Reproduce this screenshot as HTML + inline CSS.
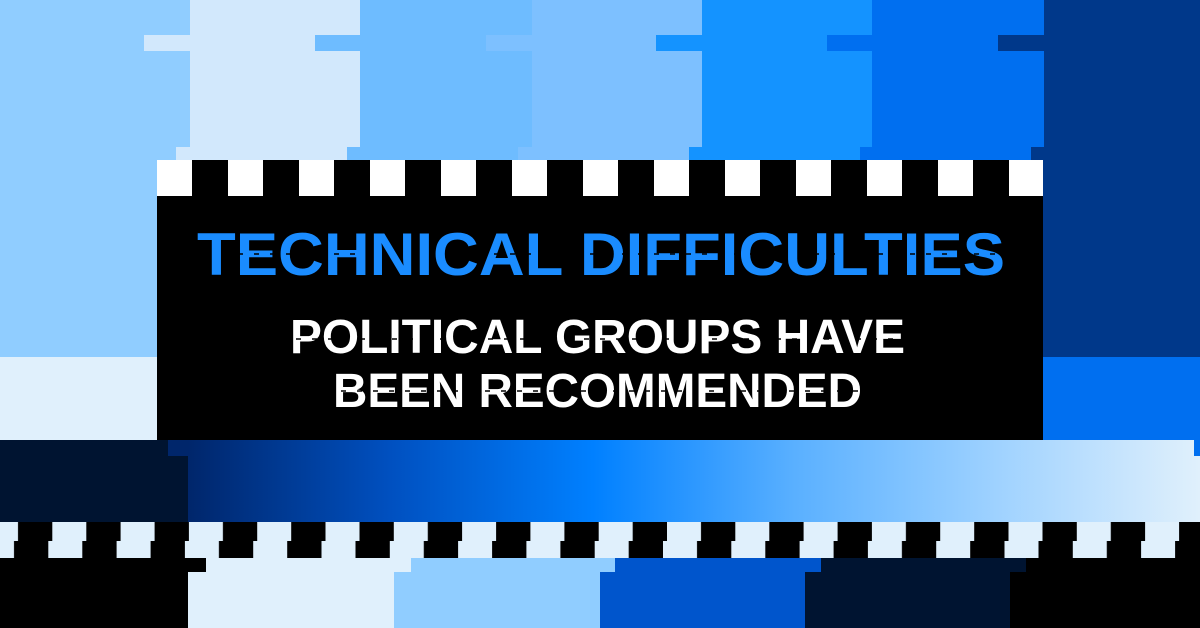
<!DOCTYPE html>
<html><head><meta charset="utf-8"><style>
html,body{margin:0;padding:0;width:1200px;height:628px;overflow:hidden;background:#000}
svg{display:block}
</style></head><body>
<svg width="1200" height="628" viewBox="0 0 1200 628" xmlns="http://www.w3.org/2000/svg">
<defs>
<linearGradient id="g" x1="188" y1="0" x2="1200" y2="0" gradientUnits="userSpaceOnUse">
<stop offset="0" stop-color="#00266b"/>
<stop offset="0.2" stop-color="#0050c0"/>
<stop offset="0.4" stop-color="#0080ff"/>
<stop offset="0.6" stop-color="#5ab0ff"/>
<stop offset="0.8" stop-color="#9fd2ff"/>
<stop offset="1" stop-color="#e0f0fc"/>
</linearGradient>
<pattern id="ck1" x="157" y="160" width="71" height="36" patternUnits="userSpaceOnUse">
<rect width="71" height="36" fill="#000"/><rect width="35" height="36" fill="#fff"/>
</pattern>
<pattern id="ckA" x="-16" y="522" width="68.3" height="20" patternUnits="userSpaceOnUse">
<rect width="68.3" height="20" fill="#000"/><rect width="34" height="20" fill="#e0f0fc"/>
</pattern>
<pattern id="ckB" x="-20" y="541" width="68.3" height="20" patternUnits="userSpaceOnUse">
<rect width="68.3" height="20" fill="#000"/><rect width="34" height="20" fill="#e0f0fc"/>
</pattern>
</defs>
<rect x="0" y="0" width="1200" height="160" fill="#90cdff"/>
<g>
<rect x="190" y="0" width="170" height="160" fill="#d2e8fc"/>
<rect x="144" y="35" width="50" height="16" fill="#d2e8fc"/>
<rect x="194" y="115" width="170" height="16" fill="#d2e8fc"/>
<rect x="208" y="131" width="170" height="16" fill="#d2e8fc"/>
<rect x="176" y="147" width="170" height="13" fill="#d2e8fc"/>

<rect x="360" y="0" width="172" height="160" fill="#6ebcff"/>
<rect x="315" y="35" width="50" height="16" fill="#6ebcff"/>
<rect x="364" y="115" width="172" height="16" fill="#6ebcff"/>
<rect x="378" y="131" width="172" height="16" fill="#6ebcff"/>
<rect x="347" y="147" width="172" height="13" fill="#6ebcff"/>

<rect x="532" y="0" width="170" height="160" fill="#7dc0ff"/>
<rect x="486" y="35" width="50" height="16" fill="#7dc0ff"/>
<rect x="536" y="115" width="170" height="16" fill="#7dc0ff"/>
<rect x="550" y="131" width="170" height="16" fill="#7dc0ff"/>
<rect x="518" y="147" width="170" height="13" fill="#7dc0ff"/>

<rect x="702" y="0" width="170" height="160" fill="#1493ff"/>
<rect x="656" y="35" width="50" height="16" fill="#1493ff"/>
<rect x="706" y="115" width="170" height="16" fill="#1493ff"/>
<rect x="722" y="131" width="170" height="16" fill="#1493ff"/>
<rect x="689" y="147" width="170" height="13" fill="#1493ff"/>

<rect x="872" y="0" width="172" height="160" fill="#006ff0"/>
<rect x="827" y="35" width="50" height="16" fill="#006ff0"/>
<rect x="876" y="115" width="172" height="16" fill="#006ff0"/>
<rect x="893" y="131" width="172" height="16" fill="#006ff0"/>
<rect x="860" y="147" width="172" height="13" fill="#006ff0"/>

<rect x="1044" y="0" width="156" height="160" fill="#00388a"/>
<rect x="998" y="35" width="50" height="16" fill="#00388a"/>
<rect x="1048" y="115" width="156" height="16" fill="#00388a"/>
<rect x="1063" y="131" width="140" height="16" fill="#00388a"/>
<rect x="1031" y="147" width="170" height="13" fill="#00388a"/>
</g>
<rect x="0" y="160" width="157" height="197" fill="#90cdff"/>
<rect x="0" y="357" width="157" height="83" fill="#e0f0fc"/>
<rect x="1043" y="160" width="157" height="197" fill="#00388a"/>
<rect x="1043" y="357" width="157" height="83" fill="#006ff0"/>
<rect x="157" y="160" width="886" height="280" fill="#000"/>
<rect x="157" y="160" width="886" height="36" fill="url(#ck1)"/>
<rect x="0" y="440" width="1200" height="82" fill="#001431"/>
<rect x="168" y="440" width="1026" height="16" fill="url(#g)"/>
<rect x="1194" y="440" width="6" height="16" fill="#006ff0"/>
<rect x="188" y="456" width="1012" height="66" fill="url(#g)"/>
<rect x="0" y="522" width="1200" height="19" fill="url(#ckA)"/>
<rect x="0" y="541" width="1200" height="17" fill="url(#ckB)"/>
<rect x="0" y="558" width="206" height="14" fill="#000"/>
<rect x="0" y="572" width="188" height="56" fill="#000"/>
<rect x="206" y="558" width="205" height="14" fill="#e0f0fc"/>
<rect x="188" y="572" width="206" height="56" fill="#e0f0fc"/>
<rect x="411" y="558" width="204" height="14" fill="#90cdff"/>
<rect x="394" y="572" width="206" height="56" fill="#90cdff"/>
<rect x="615" y="558" width="206" height="14" fill="#0055cc"/>
<rect x="600" y="572" width="205" height="56" fill="#0055cc"/>
<rect x="821" y="558" width="205" height="14" fill="#001431"/>
<rect x="805" y="572" width="205" height="56" fill="#001431"/>
<rect x="1026" y="558" width="174" height="14" fill="#000"/>
<rect x="1010" y="572" width="190" height="56" fill="#000"/>
<g font-family="Liberation Sans, sans-serif" font-weight="bold">
<text x="197" y="275" font-size="60" fill="#1a8cff" textLength="808" lengthAdjust="spacingAndGlyphs">TECHNICAL DIFFICULTIES</text>
<text x="290" y="353" font-size="48" fill="#fff" textLength="615" lengthAdjust="spacingAndGlyphs">POLITICAL GROUPS HAVE</text>
<text x="333" y="407" font-size="48" fill="#fff" textLength="529" lengthAdjust="spacingAndGlyphs">BEEN RECOMMENDED</text>
</g>
<g stroke="#000" stroke-width="1.5" stroke-dasharray="5 11">
<line x1="190" y1="254" x2="1010" y2="254"/>
<line x1="280" y1="339" x2="910" y2="339"/>
<line x1="325" y1="391" x2="870" y2="391"/>
</g>
</svg>
</body></html>
